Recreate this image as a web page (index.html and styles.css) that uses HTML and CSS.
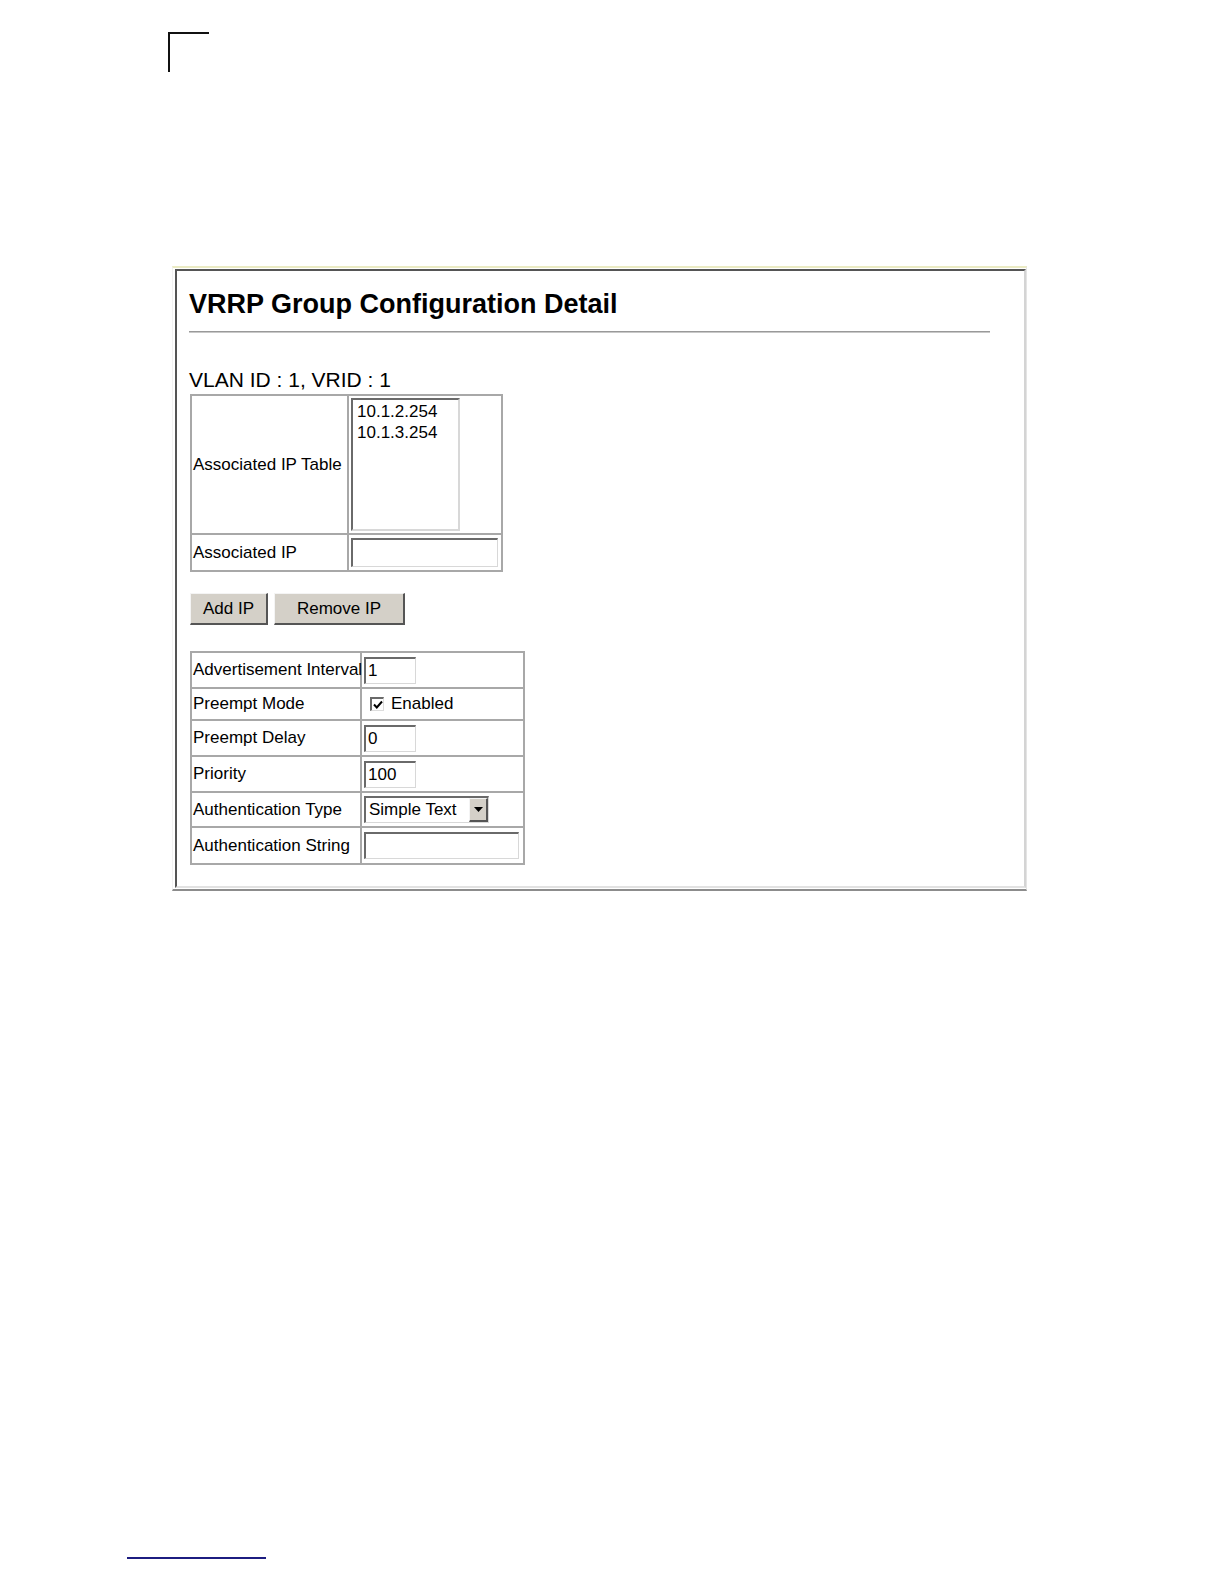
FILE: index.html
```html
<!DOCTYPE html>
<html>
<head>
<meta charset="utf-8">
<title>VRRP Group Configuration Detail</title>
<link rel="stylesheet" href="styles.css">
</head>
<body>
<div class="page">
<div class="corner"></div>
<div class="shot">
  <div class="win">
    <div class="title">VRRP Group Configuration Detail</div>
    <div class="rule"></div>
    <div class="sub">VLAN ID : 1, VRID : 1</div>
    <table class="grid t1">
      <tr>
        <td class="c1 t1c1">Associated IP Table</td>
        <td class="c2 t1c2 pad-list">
          <div class="listbox">
            <div>10.1.2.254</div>
            <div>10.1.3.254</div>
          </div>
        </td>
      </tr>
      <tr>
        <td class="c1 t1c1">Associated IP</td>
        <td class="c2 t1c2 pad-ip"><div class="field wide1"></div></td>
      </tr>
    </table>
    <div class="buttons">
      <div class="btn add">Add IP</div>
      <div class="btn remove">Remove IP</div>
    </div>
    <table class="grid t2">
      <tr>
        <td class="c1 t2c1"><div class="cell h34">Advertisement Interval</div></td>
        <td class="c2 t2c2"><div class="cell h34"><div class="field small">1</div></div></td>
      </tr>
      <tr>
        <td class="c1 t2c1"><div class="cell h30">Preempt Mode</div></td>
        <td class="c2 t2c2"><div class="cell h30 chk-row"><span class="checkbox"><svg width="10" height="10" viewBox="0 0 10 10"><path d="M1 4.5 L3.8 7.5 L9 1.5" fill="none" stroke="#000" stroke-width="2"/></svg></span><span class="chk-label">Enabled</span></div></td>
      </tr>
      <tr>
        <td class="c1 t2c1"><div class="cell h34">Preempt Delay</div></td>
        <td class="c2 t2c2"><div class="cell h34"><div class="field small">0</div></div></td>
      </tr>
      <tr>
        <td class="c1 t2c1"><div class="cell h34">Priority</div></td>
        <td class="c2 t2c2"><div class="cell h34"><div class="field small">100</div></div></td>
      </tr>
      <tr>
        <td class="c1 t2c1"><div class="cell h33">Authentication Type</div></td>
        <td class="c2 t2c2"><div class="cell h33"><div class="select"><span class="sel-text">Simple Text</span><span class="sel-btn"><svg width="9" height="5" viewBox="0 0 9 5"><path d="M0 0 H9 L4.5 5 Z" fill="#000"/></svg></span></div></div></td>
      </tr>
      <tr>
        <td class="c1 t2c1"><div class="cell h35">Authentication String</div></td>
        <td class="c2 t2c2"><div class="cell h35"><div class="field wide2"></div></div></td>
      </tr>
    </table>
  </div>
</div>
<div class="footer-line"></div>
</div>
</body>
</html>
```

FILE: styles.css
```css
html, body {
  margin: 0;
  padding: 0;
  background: #ffffff;
}
body {
  font-family: "Liberation Sans", Arial, sans-serif;
  color: #000;
}
.page {
  padding-top: 32px;
  padding-bottom: 20px;
}
.corner {
  margin-left: 168px;
  width: 39px;
  height: 38px;
  border-left: 2px solid #111;
  border-top: 2px solid #111;
}
.shot {
  margin-top: 194px;
  margin-left: 172px;
  width: 855px;
  box-sizing: border-box;
  border-top: 2px solid #ebebc4;
  border-left: 1px solid #f2f2f2;
  border-right: 1px solid #e4e4e4;
  border-bottom: 2px solid #8c8c8c;
  padding: 1px 0 1px 2px;
}
.win {
  border-top: 2px solid #555;
  border-left: 2px solid #555;
  border-right: 2px solid #d4d4d4;
  border-bottom: 2px solid #e2e2e2;
  padding: 17px 0 21px 12px;
}
.title {
  font-weight: bold;
  font-size: 27px;
  line-height: 32px;
  height: 32px;
  white-space: nowrap;
}
.rule {
  margin-top: 11px;
  width: 801px;
  height: 0;
  border-top: 1px solid #999;
  border-bottom: 1px solid #c8c8c8;
}
.sub {
  margin-top: 35px;
  font-size: 21px;
  line-height: 24px;
  height: 24px;
  white-space: nowrap;
}
.grid {
  border-collapse: separate;
  border-spacing: 0;
  table-layout: fixed;
  border: 1px solid #a8a8a8;
  margin-left: 1px;
  font-size: 17px;
}
.grid td {
  border: 1px solid #a8a8a8;
  padding: 0;
  vertical-align: middle;
  white-space: nowrap;
  box-sizing: border-box;
}
.t1 {
  margin-top: 2px;
  width: 313px;
}
.t1c1 { width: 157px; padding-left: 1px !important; }
.t1c2 { width: 154px; }
.pad-list { padding: 2px 2px 2px 2px !important; }
.pad-ip { padding: 3px 2px 3px 2px !important; }
.listbox {
  width: 109px;
  height: 133px;
  box-sizing: border-box;
  border-top: 2px solid #6a6a6a;
  border-left: 2px solid #6a6a6a;
  border-right: 2px solid #d8d8d8;
  border-bottom: 2px solid #d8d8d8;
  padding: 1px 0 0 4px;
  line-height: 21px;
  font-size: 17px;
}
.field {
  box-sizing: border-box;
  height: 29px;
  border-top: 2px solid #6a6a6a;
  border-left: 2px solid #6a6a6a;
  border-right: 1px solid #d8d8d8;
  border-bottom: 1px solid #d8d8d8;
  background: #fff;
  font-size: 17px;
  line-height: 25px;
  padding-left: 2px;
}
.wide1 { width: 147px; }
.small { width: 52px; height: 27px; line-height: 24px; }
.wide2 { width: 155px; height: 27px; }
.buttons {
  margin-top: 21px;
  display: flex;
  gap: 6px;
  font-size: 17px;
}
.btn {
  box-sizing: border-box;
  height: 32px;
  background: #d4d0c8;
  border-top: 1px solid #f4f4f4;
  border-left: 1px solid #f4f4f4;
  border-right: 2px solid #555;
  border-bottom: 2px solid #555;
  display: flex;
  align-items: center;
  justify-content: center;
  line-height: 1;
}
.btn.add { width: 78px; margin-left: 1px; }
.btn.remove { width: 131px; }
.t2 {
  margin-top: 26px;
  width: 335px;
}
.t2c1 { width: 170px; padding-left: 1px !important; }
.t2c2 { width: 163px; padding-left: 2px !important; }
.cell {
  display: flex;
  align-items: center;
}
.h30 { height: 30px; }
.h33 { height: 33px; }
.h34 { height: 34px; }
.h35 { height: 35px; }
.chk-row { padding-left: 6px; }
.checkbox {
  box-sizing: border-box;
  width: 14px;
  height: 14px;
  border-top: 2px solid #6a6a6a;
  border-left: 2px solid #6a6a6a;
  border-right: 1px solid #ddd;
  border-bottom: 1px solid #ddd;
  display: flex;
  align-items: center;
  justify-content: center;
  background: #fff;
}
.chk-label { margin-left: 7px; }
.select {
  box-sizing: border-box;
  width: 125px;
  height: 27px;
  border-top: 2px solid #6a6a6a;
  border-left: 2px solid #6a6a6a;
  border-right: 1px solid #d8d8d8;
  border-bottom: 1px solid #d8d8d8;
  display: flex;
  align-items: stretch;
  font-size: 17px;
}
.sel-text {
  flex: 1;
  line-height: 24px;
  padding-left: 3px;
  white-space: nowrap;
}
.sel-btn {
  box-sizing: border-box;
  width: 19px;
  background: #d4d0c8;
  border-top: 1px solid #f4f4f4;
  border-left: 1px solid #f4f4f4;
  border-right: 2px solid #555;
  border-bottom: 2px solid #555;
  display: flex;
  align-items: center;
  justify-content: center;
}
.footer-line {
  margin-top: 666px;
  margin-left: 127px;
  width: 139px;
  height: 2px;
  background: #1c1c80;
}
```
